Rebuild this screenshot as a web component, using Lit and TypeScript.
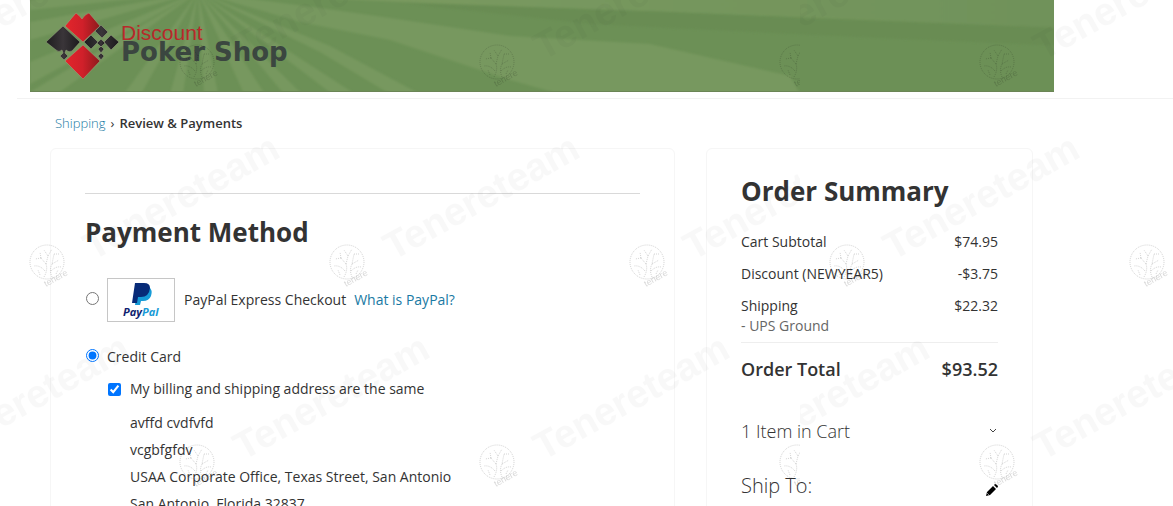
import { LitElement, html, css, svg } from "lit";
import { customElement, property } from "lit/decorators.js";

@customElement("shop-banner")
class ShopBanner extends LitElement {
  static styles = css`
    :host {
      display: block;
      background: #6c9056;
    }
    svg {
      display: block;
      width: 100%;
      height: auto;
    }
    .discount {
      font: 21px "Liberation Sans", Arial, sans-serif;
      fill: #b8292a;
    }
    .shop {
      font: bold 26px "DejaVu Sans", Verdana, sans-serif;
      fill: #3b4640;
    }
  `;

  render() {
    return html`
      <svg viewBox="0 0 1024 92" role="img" aria-label="Discount Poker Shop">
        <defs>
          <linearGradient id="red" x1="0" x2="1">
            <stop offset="0" stop-color="#e3262b" />
            <stop offset="0.5" stop-color="#d0202a" />
            <stop offset="1" stop-color="#8c1a1c" />
          </linearGradient>
          <linearGradient id="black" x1="0" x2="1">
            <stop offset="0" stop-color="#1d1c1e" />
            <stop offset="0.5" stop-color="#3a3539" />
            <stop offset="1" stop-color="#1b1a1c" />
          </linearGradient>
          <linearGradient id="top" x1="0" x2="1">
            <stop offset="0.3" stop-color="#79995f" />
            <stop offset="1" stop-color="#70925a" />
          </linearGradient>
          <filter id="soft" x="-5%" y="-20%" width="110%" height="140%">
            <feGaussianBlur stdDeviation="1" />
          </filter>
        </defs>
        <g filter="url(#soft)">
          <g fill="#77985f">
            <path d="M168-8L0 10V0L60-8zM168-8L0 40V22zM168-8L0 84V62zM168-8L30 92H0z" />
            <path d="M168-8L94 94h17zM168-8L140 94h13zM168-8L174 94h14zM168-8L214 94h21z" />
            <path d="M168-8L254 94h18zM168-8L302 94h23zM168-8L290 52L360 94h30L300 46z" />
            <path d="M168-8L270 22L360 40L480 80L530 94H770L760 76L620 44L480 36L360 18L290 8z" />
          </g>
          <path fill="url(#top)" d="M168-8L370 2L640 12L780 18L1030 28V-8z" />
          <path fill="#698c53" d="M370 3L640 12L780 18L1030 28V46L760 34L560 24z" />
        </g>
        <rect y="91" width="1024" height="1" fill="#6b8556" />

        <g stroke="#9aa783" stroke-width="0.5">
          <path fill="url(#red)" d="M35 26L46 13Q49 15 52 19Q55 14 59 13L70 26L53 42z" />
          <path fill="url(#red)" d="M53 45L70 61L53 79L35 61z" />
          <path fill="url(#black)"
            d="M33 26L50 42L42 51Q39 53 36 50L35 53L38 56L34 60L30 56L33 53L32 50Q29 53 26 50L16 42z" />
          <path fill="url(#black)"
            d="M71 25L78 32L72 38L65 31zM81 35L89 42L81 50L74 42zM61 35L68 42L61 49L54 42z" />
          <path fill="url(#black)"
            d="M71 39L75 43L71 47L67 43zM71 46L74 49L71 53L68 49zM71 53L74 56L71 60L68 56z" />
        </g>
        <text class="discount" x="91" y="40">Discount</text>
        <text class="shop" x="91" y="61">Poker Shop</text>
      </svg>
    `;
  }
}

@customElement("paypal-mark")
class PaypalMark extends LitElement {
  static styles = css`
    :host {
      display: block;
      border: 1px solid #c6c6c6;
    }
    svg {
      display: block;
      width: 66px;
      height: 42px;
    }
    text {
      font: italic bold 11px "Open Sans", sans-serif;
    }
  `;

  render() {
    return html`
      <svg viewBox="0 0 66 42" role="img" aria-label="PayPal">
        <path fill="#169bd7" d="M41 8Q45 11 43 17Q41 22 35 22H33L32 26H27L29 12z" />
        <path fill="#072b78" d="M27 4H36Q42 4 42 9Q41 18 33 18H30L29 24H24z" />
        <text x="15" y="37" fill="#101f70">Pay<tspan fill="#179bd7">Pal</tspan></text>
      </svg>
    `;
  }
}

@customElement("tenere-watermark")
class TenereWatermark extends LitElement {
  static styles = css`
    :host {
      pointer-events: none;
      mix-blend-mode: multiply;
    }
    svg {
      display: block;
      width: 100%;
      height: 100%;
    }
    .word {
      font: bold 39px "Liberation Sans", Arial, sans-serif;
      fill: #000;
      fill-opacity: 0.027;
    }
    .small {
      font: 9px "Liberation Sans", Arial, sans-serif;
      fill: #000;
      fill-opacity: 0.16;
    }
    .tree {
      fill: none;
      stroke: #000;
      stroke-opacity: 0.16;
      stroke-width: 1;
      stroke-dasharray: 1 1;
    }
  `;

  private stamp(x: number, y: number) {
    return svg`
      <g transform="translate(${x} ${y})">
        <circle class="tree" r="17" />
        <path class="tree"
          d="M-3 15Q1 8-1 2L-6-4M5 15Q2 8 5 2L7-8M-1 2L1-6L-3-12M5 2L12-2M-6-4L-12-3M-6-4L-7-10M1-6L5-13M-2 9Q-7 3-13 4M4 9Q9 4 14 5M7-8L12-8M-7 13L-9 8M9 12L11 8" />
        <text class="small" transform="translate(-1 25) rotate(-29)">tenere</text>
        <text class="word" transform="translate(46 -1) rotate(-29)">Tenereteam</text>
      </g>
    `;
  }

  render() {
    const spots = [
      [-103, 62], [197, 62], [497, 62], [797, 62],
      [47, 262], [347, 262], [647, 262],
      [-103, 462], [197, 462], [497, 462], [797, 462],
    ];
    return html`
      <svg aria-hidden="true">
        <defs>
          <pattern id="tile" width="800" height="400" patternUnits="userSpaceOnUse">
            ${spots.map(([x, y]) => this.stamp(x, y))}
          </pattern>
        </defs>
        <rect width="100%" height="100%" fill="url(#tile)" />
      </svg>
    `;
  }
}

@customElement("payment-panel")
class PaymentPanel extends LitElement {
  @property({ attribute: false }) address: string[] = [];

  static styles = css`
    :host {
      display: block;
    }
    hr {
      margin: 10px 0 22px;
      border: 0;
      border-top: 1px solid #d9d9d9;
    }
    h2 {
      margin: 0;
      font-size: 26px;
      line-height: 32px;
      font-weight: 700;
    }
    .method {
      display: flex;
      align-items: center;
      gap: 8px;
      margin-left: 1px;
    }
    .paypal {
      margin-top: 30px;
    }
    .card {
      margin-top: 25px;
    }
    .method label {
      display: flex;
      align-items: center;
      gap: 9px;
    }
    input {
      width: 13px;
      height: 13px;
      margin: 0 0 3px;
      flex: none;
      accent-color: #0075ff;
    }
    a {
      color: #1979a3;
      text-decoration: none;
    }
    .billing {
      display: flex;
      align-items: center;
      gap: 9px;
      margin: 12px 0 0 23px;
    }
    .billing input {
      margin: 0;
    }
    address {
      margin: 10px 0 0 45px;
      font-style: normal;
      line-height: 27px;
    }
  `;

  render() {
    return html`
      <hr />
      <h2>Payment Method</h2>
      <div class="method paypal">
        <input type="radio" name="method" id="paypal" />
        <label for="paypal"><paypal-mark></paypal-mark>PayPal Express Checkout</label>
        <a href="#paypal">What is PayPal?</a>
      </div>
      <div class="method card">
        <input type="radio" name="method" id="card" checked />
        <label for="card">Credit Card</label>
      </div>
      <div class="billing">
        <input type="checkbox" id="same" checked />
        <label for="same">My billing and shipping address are the same</label>
      </div>
      <address>${this.address.map((line) => html`<div>${line}</div>`)}</address>
    `;
  }
}

@customElement("order-summary")
class OrderSummary extends LitElement {
  static styles = css`
    :host {
      display: block;
    }
    h2 {
      margin: 0 0 19px;
      font-size: 26px;
      line-height: 32px;
      font-weight: 700;
    }
    table {
      width: 100%;
      border-collapse: collapse;
    }
    th,
    td {
      padding: 6px 0;
      font-weight: 400;
      text-align: left;
      vertical-align: top;
    }
    td {
      text-align: right;
    }
    small {
      display: block;
      font-size: 14px;
      color: #666;
    }
    tfoot th,
    tfoot td {
      padding: 13px 0;
      border-top: 1px solid #eee;
      font-size: 18px;
      line-height: 26px;
      font-weight: 600;
    }
    button {
      display: flex;
      align-items: center;
      justify-content: space-between;
      border: 0;
      padding: 0;
      background: none;
      color: inherit;
      font: inherit;
    }
    .items {
      width: 100%;
      margin-top: 23px;
      padding-right: 1px;
      font-size: 18px;
      line-height: 26px;
      font-weight: 300;
    }
    .ship {
      display: flex;
      align-items: center;
      justify-content: space-between;
      margin-top: 28px;
    }
    h3 {
      margin: 0;
      font-size: 20px;
      line-height: 28px;
      font-weight: 300;
    }
    .ship button {
      padding-top: 8px;
    }
  `;

  render() {
    return html`
      <h2>Order Summary</h2>
      <table>
        <tbody>
          <tr><th scope="row">Cart Subtotal</th><td>$74.95</td></tr>
          <tr><th scope="row">Discount (NEWYEAR5)</th><td>-$3.75</td></tr>
          <tr><th scope="row">Shipping<small>- UPS Ground</small></th><td>$22.32</td></tr>
        </tbody>
        <tfoot>
          <tr><th scope="row">Order Total</th><td>$93.52</td></tr>
        </tfoot>
      </table>
      <button class="items" type="button">
        1 Item in Cart
        <svg width="8" height="6" viewBox="0 0 8 6" aria-hidden="true">
          <path d="M1 1L4 4L7 1" fill="none" stroke="#444" />
        </svg>
      </button>
      <div class="ship">
        <h3>Ship To:</h3>
        <button type="button" aria-label="Edit shipping address">
          <svg width="12" height="12" viewBox="0 0 12 12" aria-hidden="true">
            <path d="M0 12L1 8L7 2L10 5L4 11zM8 1L9 0Q10 0 12 2Q12 3 11 4z" />
            <path d="M1 9L3 11" stroke="#fff" stroke-width="0.5" />
          </svg>
        </button>
      </div>
    `;
  }
}

@customElement("app-root")
class AppRoot extends LitElement {
  static styles = css`
    :host {
      display: block;
      position: relative;
      height: 100vh;
      overflow-y: auto;
      scrollbar-width: none;
      background: #fff;
      color: #333;
      font: 14px/20px "Open Sans", sans-serif;
    }
    shop-banner {
      max-width: 1024px;
      margin-left: 30px;
    }
    .page {
      margin: 6px 0 0 17px;
      border-top: 1px solid #f2f2f2;
    }
    .content {
      max-width: 983px;
      margin-left: 33px;
    }
    ol {
      display: flex;
      gap: 5px;
      margin: 0;
      padding: 15px 5px;
      list-style: none;
      font-size: 13px;
      line-height: 19px;
    }
    ol a {
      color: #1979a3;
      font-weight: 300;
      text-decoration: none;
    }
    ol strong {
      font-weight: 600;
    }
    .columns {
      display: grid;
      grid-template-columns: 625fr 327fr;
      gap: 31px;
      align-items: start;
    }
    section,
    aside {
      border: 1px solid #f6f6f6;
      border-radius: 6px;
      padding: 34px;
    }
    aside {
      padding-top: 26px;
    }
    tenere-watermark {
      position: absolute;
      inset: 0;
    }
  `;

  private address = [
    "avffd cvdfvfd",
    "vcgbfgfdv",
    "USAA Corporate Office, Texas Street, San Antonio",
    "San Antonio, Florida 32837",
  ];

  render() {
    return html`
      <header><shop-banner></shop-banner></header>
      <main class="page">
        <div class="content">
          <nav aria-label="Checkout steps">
            <ol>
              <li><a href="#shipping">Shipping</a></li>
              <li aria-hidden="true">›</li>
              <li><strong>Review &amp; Payments</strong></li>
            </ol>
          </nav>
          <div class="columns">
            <section><payment-panel .address=${this.address}></payment-panel></section>
            <aside><order-summary></order-summary></aside>
          </div>
        </div>
      </main>
      <tenere-watermark></tenere-watermark>
    `;
  }
}
